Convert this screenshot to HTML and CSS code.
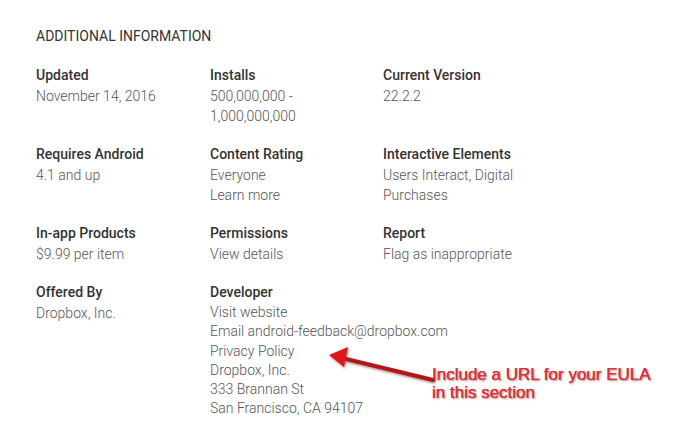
FILE: index.html
```html
<!DOCTYPE html>
<html>
<head>
<meta charset="utf-8">
<link rel="stylesheet" href="styles.css">
</head>
<body>
<div class="page">
  <h2 class="heading">ADDITIONAL INFORMATION</h2>
  <div class="grid">
    <div class="item"><div class="label">Updated</div><div class="value">November 14, 2016</div></div>
    <div class="item"><div class="label">Installs</div><div class="value">500,000,000 -<br>1,000,000,000</div></div>
    <div class="item"><div class="label">Current Version</div><div class="value">22.2.2</div></div>

    <div class="item"><div class="label">Requires Android</div><div class="value">4.1 and up</div></div>
    <div class="item"><div class="label">Content Rating</div><div class="value">Everyone<br>Learn more</div></div>
    <div class="item"><div class="label">Interactive Elements</div><div class="value">Users Interact, Digital<br>Purchases</div></div>

    <div class="item"><div class="label">In-app Products</div><div class="value">$9.99 per item</div></div>
    <div class="item"><div class="label">Permissions</div><div class="value">View details</div></div>
    <div class="item"><div class="label">Report</div><div class="value">Flag as inappropriate</div></div>

    <div class="item"><div class="label">Offered By</div><div class="value">Dropbox, Inc.</div></div>
    <div class="item"><div class="label">Developer</div><div class="value dev">Visit website<br>Email android-feedback@dropbox.com<br>Privacy Policy<br>Dropbox, Inc.<br>333 Brannan St<br>San Francisco, CA 94107</div></div>
  </div>

  <svg class="arrow" width="120" height="50" viewBox="0 0 120 50">
    <defs>
      <filter id="sh" x="-20%" y="-50%" width="140%" height="200%">
        <feDropShadow dx="1" dy="1.5" stdDeviation="1.2" flood-color="#400" flood-opacity="0.45"/>
      </filter>
    </defs>
    <g filter="url(#sh)">
      <line x1="113" y1="38" x2="22" y2="16" stroke="#b3191c" stroke-width="4" stroke-linecap="round"/>
      <polygon points="9,13 28,5 24,25" fill="#e0141a"/>
    </g>
  </svg>
  <div class="note">Include a URL for your EULA<br>in this section</div>
</div>
</body>
</html>
```
FILE: styles.css
```css
html, body {
  margin: 0;
  padding: 0;
  background: #ffffff;
}
.page {
  position: relative;
  width: 685px;
  height: 447px;
  padding: 26px 0 0 36px;
  box-sizing: border-box;
  font-family: Roboto, "Liberation Sans", sans-serif;
}
.heading {
  margin: 0;
  font-size: 14px;
  font-weight: 400;
  line-height: 20px;
  color: #333333;
}
.grid {
  margin-top: 19px;
  display: grid;
  grid-template-columns: 174px 173px 200px;
  row-gap: 18px;
}
.label {
  font-size: 14px;
  font-weight: 500;
  line-height: 20px;
  color: #333333;
  margin-bottom: 1px;
}
.value {
  font-size: 14px;
  font-weight: 300;
  line-height: 20px;
  color: #555555;
}
.value.dev {
  margin-top: 1px;
  line-height: 19.3px;
  white-space: nowrap;
}
.arrow {
  position: absolute;
  left: 320px;
  top: 342px;
}
.note {
  position: absolute;
  left: 432px;
  top: 366px;
  font-family: "Liberation Sans", Arial, sans-serif;
  font-size: 17px;
  line-height: 18px;
  color: #d8343a;
  text-shadow: 0 0 0.6px #c0282e, 1px 1px 2px rgba(110, 0, 0, 0.55);
  white-space: nowrap;
}
```
